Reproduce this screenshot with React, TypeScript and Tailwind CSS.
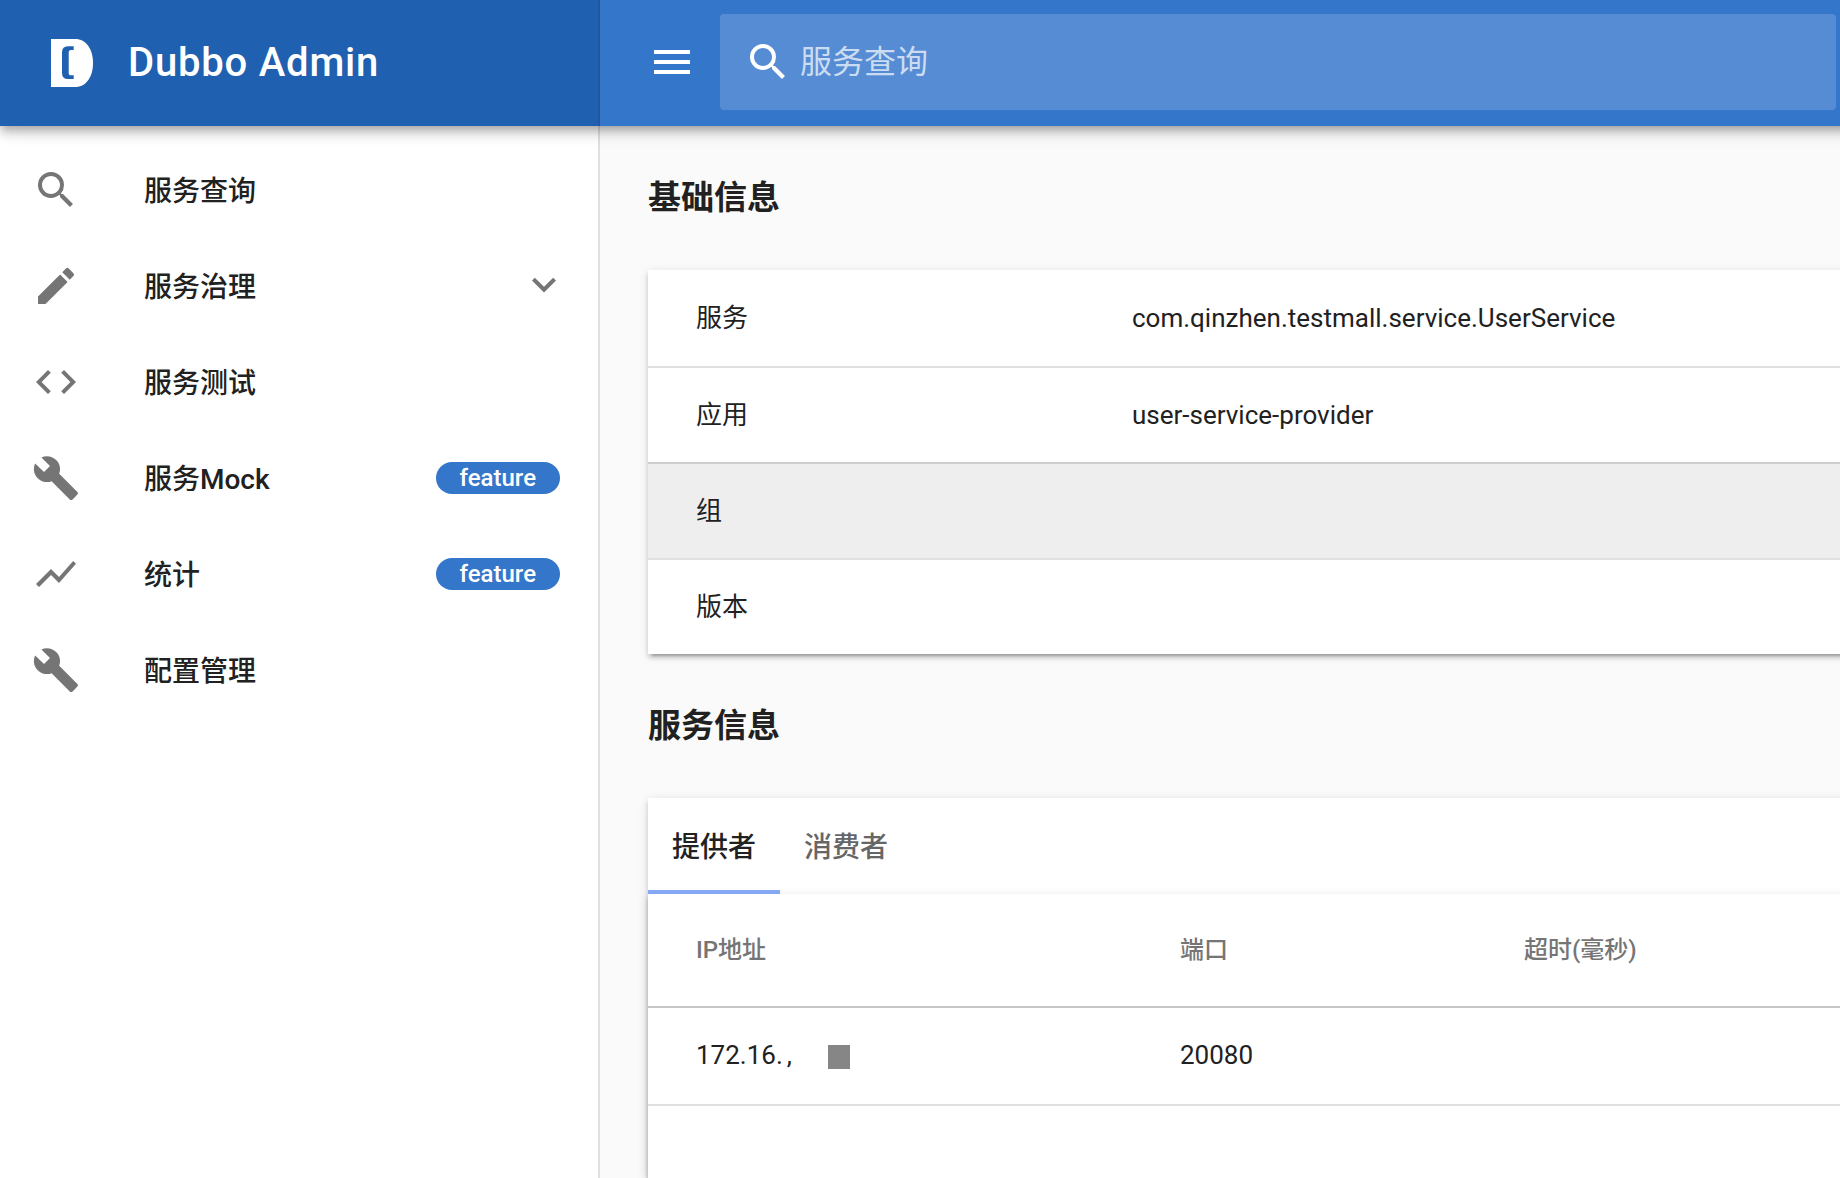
import { MdBuild, MdCode, MdEdit, MdMenu, MdSearch, MdShowChart } from "react-icons/md";
import type { IconType } from "react-icons";

type NavItem = { title: string; icon: IconType; badge?: string; group?: boolean };

const navItems: NavItem[] = [
    { title: "服务查询", icon: MdSearch },
    { title: "服务治理", icon: MdEdit, group: true },
    { title: "服务测试", icon: MdCode },
    { title: "服务Mock", icon: MdBuild, badge: "feature" },
    { title: "统计", icon: MdShowChart, badge: "feature" },
    { title: "配置管理", icon: MdBuild },
];

const basicInfo = [
    { label: "服务", value: "com.qinzhen.testmall.service.UserService", row: "", cell: "" },
    { label: "应用", value: "user-service-provider", row: "", cell: "border-t-2 border-[#e0e0e0]" },
    { label: "组", value: "", row: "bg-[#eee]", cell: "border-t-2 border-[#cfcfcf]" },
    { label: "版本", value: "", row: "", cell: "border-t-2 border-[#e0e0e0]" },
];

const cardShadow = "shadow-[0_6px_2px_-4px_rgba(0,0,0,0.2),0_4px_4px_0_rgba(0,0,0,0.14),0_2px_10px_0_rgba(0,0,0,0.12)]";

function Logo() {
    return (
        <svg viewBox="0 0 42 48" className="w-[42px] h-12 shrink-0" aria-hidden="true">
            <path d="M0 0h24c11.500 0 18 10.500 18 24s-6.500 24-18 24H0z" fill="#fff" />
            <path d="M22.700 7.300H17q-6 0-6 6v20.700q0 6 6 6h5.700v-3.700H20q-2.300 0-2.300-2.600V13.700q0-2.700 2.300-2.700h2.700z" fill="#2060b0" />
        </svg>
    );
}

function ChevronDown() {
    return (
        <svg viewBox="0 0 24 24" className="size-12 text-[#757575]" fill="currentColor" aria-hidden="true">
            <path d="M7.410 7.840L12 12.420l4.590-4.580L18 9.250l-6 6-6-6z" />
        </svg>
    );
}

function Sidebar() {
    return (
        <nav className="w-[600px] shrink-0 bg-white border-r-2 border-[#dfdfdf] pt-4">
            {navItems.map(({ title, icon: Icon, badge, group }) => (
                <a key={title} href="#" className="flex items-center h-24 pl-8 pr-[30px]">
                    <Icon className="size-12 text-[#757575] shrink-0" />
                    <span className="ml-16 flex-1 pt-1 text-[28px] leading-10 font-medium">{title}</span>
                    {badge && (
                        <span className="mr-2 h-8 px-6 rounded-full bg-[#3376ca] text-white text-2xl leading-8 font-medium">{badge}</span>
                    )}
                    {group && <ChevronDown />}
                </a>
            ))}
        </nav>
    );
}

function Header() {
    return (
        <header className="relative z-10 -mr-4 flex h-[126px] text-white bg-[#3376ca] shadow-[0_4px_8px_-2px_rgba(0,0,0,0.2),0_8px_10px_0_rgba(0,0,0,0.14),0_2px_20px_0_rgba(0,0,0,0.12)]">
            <div className="flex items-center w-[600px] shrink-0 pl-[51px] gap-[35px] bg-[#2060b0] border-r-2 border-[#22559f]">
                <Logo />
                <span className="text-[40px] leading-[48px] font-medium tracking-[0.02em]">Dubbo Admin</span>
            </div>
            <div className="flex flex-1 items-start pt-3.5 pl-12 pr-5">
                <button type="button" aria-label="menu" className="flex items-center h-24">
                    <MdMenu className="size-12" />
                </button>
                <label className="ml-6 flex flex-1 items-center h-24 pl-6 rounded bg-[#568cd3]">
                    <MdSearch className="size-12 shrink-0" />
                    <input
                        type="text"
                        aria-label="服务查询"
                        placeholder="服务查询"
                        className="ml-2 flex-1 h-16 text-[32px] bg-transparent outline-none placeholder:text-[#cbdcf2]"
                    />
                </label>
            </div>
        </header>
    );
}

function BasicInfo() {
    return (
        <div className={`-mr-4 bg-white rounded-tl-xs ${cardShadow}`}>
            <table className="w-full table-fixed border-separate border-spacing-0 text-[26px] leading-9">
                <tbody>
                    {basicInfo.map(({ label, value, row, cell }) => (
                        <tr key={label} className={`h-24 ${row}`}>
                            <th scope="row" className={`w-[436px] px-12 text-left font-normal ${cell}`}>{label}</th>
                            <td className={`px-12 ${cell}`}>{value}</td>
                        </tr>
                    ))}
                </tbody>
            </table>
        </div>
    );
}

function ServiceInfo() {
    return (
        <div className={`-mr-4 flex flex-1 flex-col bg-white ${cardShadow}`}>
            <div role="tablist" className="flex h-24 text-[28px] leading-10 font-medium">
                <button type="button" role="tab" aria-selected="true" className="px-6 pt-2 border-b-4 border-[#88aefa]">提供者</button>
                <button type="button" role="tab" aria-selected="false" className="px-6 pt-1 text-[#666]">消费者</button>
            </div>
            <div className={`flex-1 bg-white ${cardShadow}`}>
                <table className="w-full table-fixed border-separate border-spacing-0 text-left">
                    <thead className="text-2xl text-[#757575]">
                        <tr className="h-[114px]">
                            <th className="w-[484px] px-12 font-medium border-b-2 border-[#c6c6c6]">IP地址</th>
                            <th className="w-[344px] px-12 font-medium border-b-2 border-[#c6c6c6]">端口</th>
                            <th className="px-12 font-medium border-b-2 border-[#c6c6c6]">超时(毫秒)</th>
                        </tr>
                    </thead>
                    <tbody className="text-[26px] leading-9">
                        <tr className="h-[98px]">
                            <td className="px-12 pb-0.5 border-b-2 border-[#e0e0e0]">
                                <span className="flex items-center">
                                    172.16.
                                    <span className="ml-1">,</span>
                                    <span className="ml-9 mt-1 w-[22px] h-6 bg-[#868686]" />
                                </span>
                            </td>
                            <td className="px-12 pb-0.5 border-b-2 border-[#e0e0e0]">20080</td>
                            <td className="px-12 pb-0.5 border-b-2 border-[#e0e0e0]" />
                        </tr>
                    </tbody>
                </table>
            </div>
        </div>
    );
}

export default function App() {
    return (
        <div className="flex flex-col min-h-screen overflow-hidden bg-[#fafafa] text-[#212121] font-[Roboto,'Noto_Sans_CJK_SC',sans-serif]">
            <Header />
            <div className="flex flex-1">
                <Sidebar />
                <main className="flex flex-1 flex-col pl-12 min-w-0">
                    <h3 className="py-12 text-[33px] leading-[48px] font-bold">基础信息</h3>
                    <BasicInfo />
                    <h3 className="py-12 text-[33px] leading-[48px] font-bold">服务信息</h3>
                    <ServiceInfo />
                </main>
            </div>
        </div>
    );
}
